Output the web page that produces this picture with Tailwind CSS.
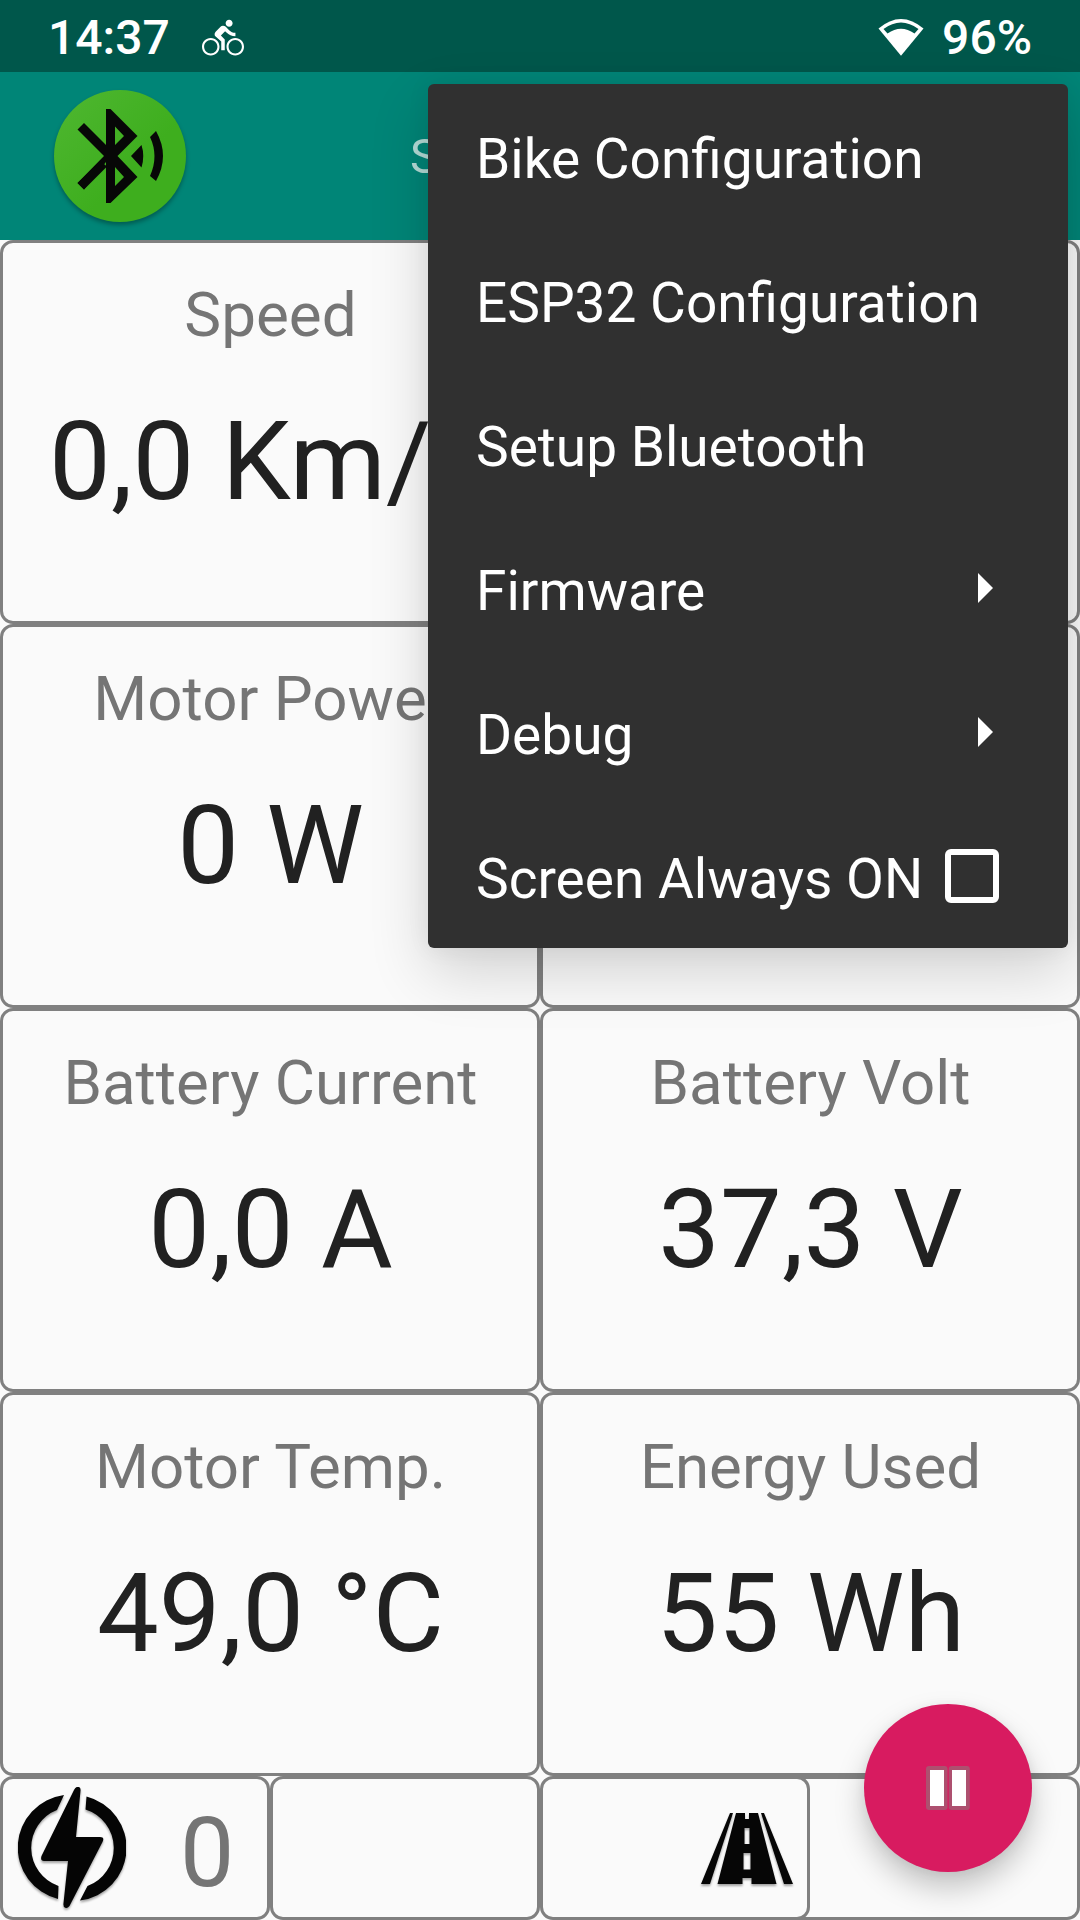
<!DOCTYPE html>
<html lang="en">
<head>
<meta charset="utf-8">
<title>Bike dashboard</title>
<script src="https://cdn.jsdelivr.net/npm/@tailwindcss/browser@4"></script>
</head>
<body class="relative h-[1920px] w-[1080px] overflow-hidden bg-[#fafafa] font-[Roboto,sans-serif]">
<header>
  <div class="flex h-[72px] items-center justify-between bg-[#00574b] pt-[4px] pr-[48px] pl-[48px] text-[48px] leading-none font-medium text-white">
    <div class="flex items-center gap-[32px]">
      <span>14:37</span>
      <svg class="mb-[1px] h-[42px] w-[42px]" viewBox="0 0 24 24" fill="#fff"><path d="M15.500 5.500c1.100 0 2-.900 2-2s-.900-2-2-2-2 .900-2 2 .900 2 2 2zM5 12c-2.800 0-5 2.200-5 5s2.200 5 5 5 5-2.200 5-5-2.200-5-5-5zm0 8.800c-2.100 0-3.800-1.700-3.800-3.800s1.700-3.800 3.800-3.800 3.800 1.700 3.800 3.800-1.700 3.800-3.800 3.800zm5.800-10.300l2.400-2.400.800.800c1.300 1.300 3 2.100 5.100 2.100V9c-1.500 0-2.700-.600-3.600-1.500l-1.900-1.900c-.500-.400-1-.600-1.600-.600s-1.100.200-1.400.600L7.800 8.400c-.400.400-.600.900-.600 1.400 0 .600.200 1.100.600 1.400L11 14v5h2v-6.200l-2.200-2.300zM19 12c-2.800 0-5 2.200-5 5s2.200 5 5 5 5-2.200 5-5-2.200-5-5-5zm0 8.800c-2.100 0-3.800-1.700-3.800-3.800s1.700-3.800 3.800-3.800 3.800 1.700 3.800 3.800-1.700 3.800-3.800 3.800z"/></svg>
    </div>
    <div class="flex items-center gap-[18px]">
      <svg class="mb-[3px] h-[38px] w-[46px]" viewBox="0 0 46 38"><path d="M.5 10.500Q23-8.500 45.500 10.500L23 37.800Z" fill="#fff"/><path d="M5.500 11Q23-2 40.500 11L36.500 15.500Q23 6 9.500 15.500Z" fill="#00574b"/></svg>
      <span>96%</span>
    </div>
  </div>
  <div class="flex h-[168px] items-center bg-[#008577] pl-[54px]">
    <svg class="h-[132px] w-[132px] shrink-0 overflow-visible drop-shadow-[0_3px_2px_rgba(0,0,0,0.3)]" viewBox="0 0 132 132">
      <defs><linearGradient id="g" x1="0" y1="0" x2="1" y2="1"><stop offset="0" stop-color="#4fb731"/><stop offset=".6" stop-color="#3eae1e"/></linearGradient></defs>
      <circle cx="66" cy="66" r="66" fill="url(#g)"/>
      <path fill="#070707" fill-rule="evenodd" d="M52 19H56.500L83.500 46L63.500 66L83.500 87L56.500 113H52V72L30 99.500L23.500 93L50 66L23.500 39.500L30 33L52 55ZM61 36.500V55L70 46ZM61 77V96L70 87Z"/>
      <path fill="#070707" d="M50 74V68L23.500 93L30 99.500L53 76.500ZM77 66L87.500 55Q91 66 87.500 77.500ZM96 47L102 41Q116 66 102 91L96 86Q105 66 96 47Z"/>
    </svg>
    <span class="ml-[224px] pt-[2px] text-[48.3px] text-white/70">S</span>
  </div>
</header>
<main>
  <div class="grid auto-rows-[384px] grid-cols-2 text-center">
    <section class="rounded-[13px] border-[3px] border-[#808080] pt-[32px] pl-px"><h2 class="text-[62px] leading-[80px] text-[#757575]">Speed</h2><p class="mt-[42px] text-[110px] leading-[130px] whitespace-nowrap text-[#212121]">0,0 Km/h</p></section>
    <section class="rounded-[13px] border-[3px] border-[#808080]"></section>
    <section class="rounded-[13px] border-[3px] border-[#808080] pt-[32px] pl-px"><h2 class="text-[61.800px] leading-[80px] text-[#757575]">Motor Power</h2><p class="mt-[42px] text-[110px] leading-[130px] text-[#212121]">0 W</p></section>
    <section class="rounded-[13px] border-[3px] border-[#808080]"></section>
    <section class="rounded-[13px] border-[3px] border-[#808080] pt-[32px] pl-px"><h2 class="text-[61.800px] leading-[80px] text-[#757575]">Battery Current</h2><p class="mt-[42px] text-[110px] leading-[130px] text-[#212121]">0,0 A</p></section>
    <section class="rounded-[13px] border-[3px] border-[#808080] pt-[32px] pl-px"><h2 class="text-[61.800px] leading-[80px] text-[#757575]">Battery Volt</h2><p class="mt-[42px] text-[110px] leading-[130px] text-[#212121]">37,3 V</p></section>
    <section class="rounded-[13px] border-[3px] border-[#808080] pt-[32px] pl-px"><h2 class="text-[61.800px] leading-[80px] text-[#757575]">Motor Temp.</h2><p class="mt-[42px] text-[110px] leading-[130px] text-[#212121]">49,0 °C</p></section>
    <section class="rounded-[13px] border-[3px] border-[#808080] pt-[32px] pl-px"><h2 class="text-[61.800px] leading-[80px] text-[#757575]">Energy Used</h2><p class="mt-[42px] text-[110px] leading-[130px] text-[#212121]">55 Wh</p></section>
  </div>
  <div class="grid h-[144px] grid-cols-4">
    <div class="flex items-center rounded-[13px] border-[3px] border-[#808080] pl-[15px]">
      <svg class="h-[122px] w-[108px] shrink-0 drop-shadow-[0_2px_1px_rgba(0,0,0,0.35)]" viewBox="0 0 108 122" fill="#050505"><path d="M46 8A53 53 0 0 0 40 112L40.500 99A40.500 40.500 0 0 1 39 23ZM68.500 9.500L67.500 22.500A40.500 40.500 0 0 1 69.500 99L62 113.500A53 53 0 0 0 68.500 9.500Z"/><path d="M56 3Q58-1 61 0Q63 1 62.500 4L58 50H82Q87 50 84.500 55L51.500 119Q49 122 47 120.500Q45 120 45.500 116L50 74H26Q22 74 23.500 69Z"/></svg>
      <span class="ml-[54px] pt-[10px] text-[96.600px] leading-none text-[#757575]">0</span>
    </div>
    <div class="rounded-[13px] border-[3px] border-[#808080]"></div>
    <div class="flex items-center justify-end rounded-[13px] border-[3px] border-[#808080] pr-[14px]">
      <svg class="h-[71px] w-[92px] drop-shadow-[0_2px_1px_rgba(0,0,0,0.35)]" viewBox="0 0 92 71" fill="#060606"><path d="M29 0H32L9 71H0ZM60 0H63L92 71H83Z"/><path fill-rule="evenodd" d="M35 0H44V6H48V0H57L75.500 71H50.500V65H41.500V71H16.500ZM43.500 15V31H48.500V15ZM42.500 40V56.500H49.500V40Z"/></svg>
    </div>
    <div class="-ml-[13px] rounded-r-[13px] border-[3px] border-l-0 border-[#808080]"></div>
  </div>
</main>
<nav class="absolute top-[84px] left-[428px] w-[640px] rounded-[6px] bg-[#303030] pt-[3px] text-[55px] text-white shadow-[0_24px_60px_rgba(0,0,0,0.16),0_0_24px_rgba(0,0,0,0.06)]">
  <div class="h-[144px] pl-[48px] leading-[144px]">Bike Configuration</div>
  <div class="h-[144px] pl-[48px] leading-[144px]">ESP32 Configuration</div>
  <div class="h-[144px] pl-[48px] leading-[144px]">Setup Bluetooth</div>
  <div class="flex h-[144px] items-center justify-between pr-[75px] pl-[48px]"><span>Firmware</span><svg class="mb-[6px] h-[30px] w-[15px]" viewBox="0 0 15 30"><path d="M0 0L15 15L0 30Z" fill="#fff"/></svg></div>
  <div class="flex h-[144px] items-center justify-between pr-[75px] pl-[48px]"><span>Debug</span><svg class="mb-[6px] h-[30px] w-[15px]" viewBox="0 0 15 30"><path d="M0 0L15 15L0 30Z" fill="#fff"/></svg></div>
  <div class="flex h-[141px] items-center justify-between pr-[69px] pl-[48px]"><span class="pt-[3px]">Screen Always ON</span><span class="mb-[3px] h-[54px] w-[54px] rounded-[6px] border-[6px] border-white"></span></div>
</nav>
<button class="absolute top-[1704px] left-[864px] flex h-[168px] w-[168px] items-center justify-center rounded-full bg-[#d81b60] shadow-[0_16px_30px_rgba(0,0,0,0.22),0_2px_12px_rgba(0,0,0,0.06)]">
  <svg class="h-[44px] w-[44px]" viewBox="0 0 44 44"><g fill="#ad506f"><rect y="0" width="21.500" height="44" rx="3"/><rect x="22.800" width="21" height="44" rx="3"/></g><path fill="#fff" d="M4 4H18V40H4ZM26 4H40V40H26Z"/></svg>
</button>
</body>
</html>
